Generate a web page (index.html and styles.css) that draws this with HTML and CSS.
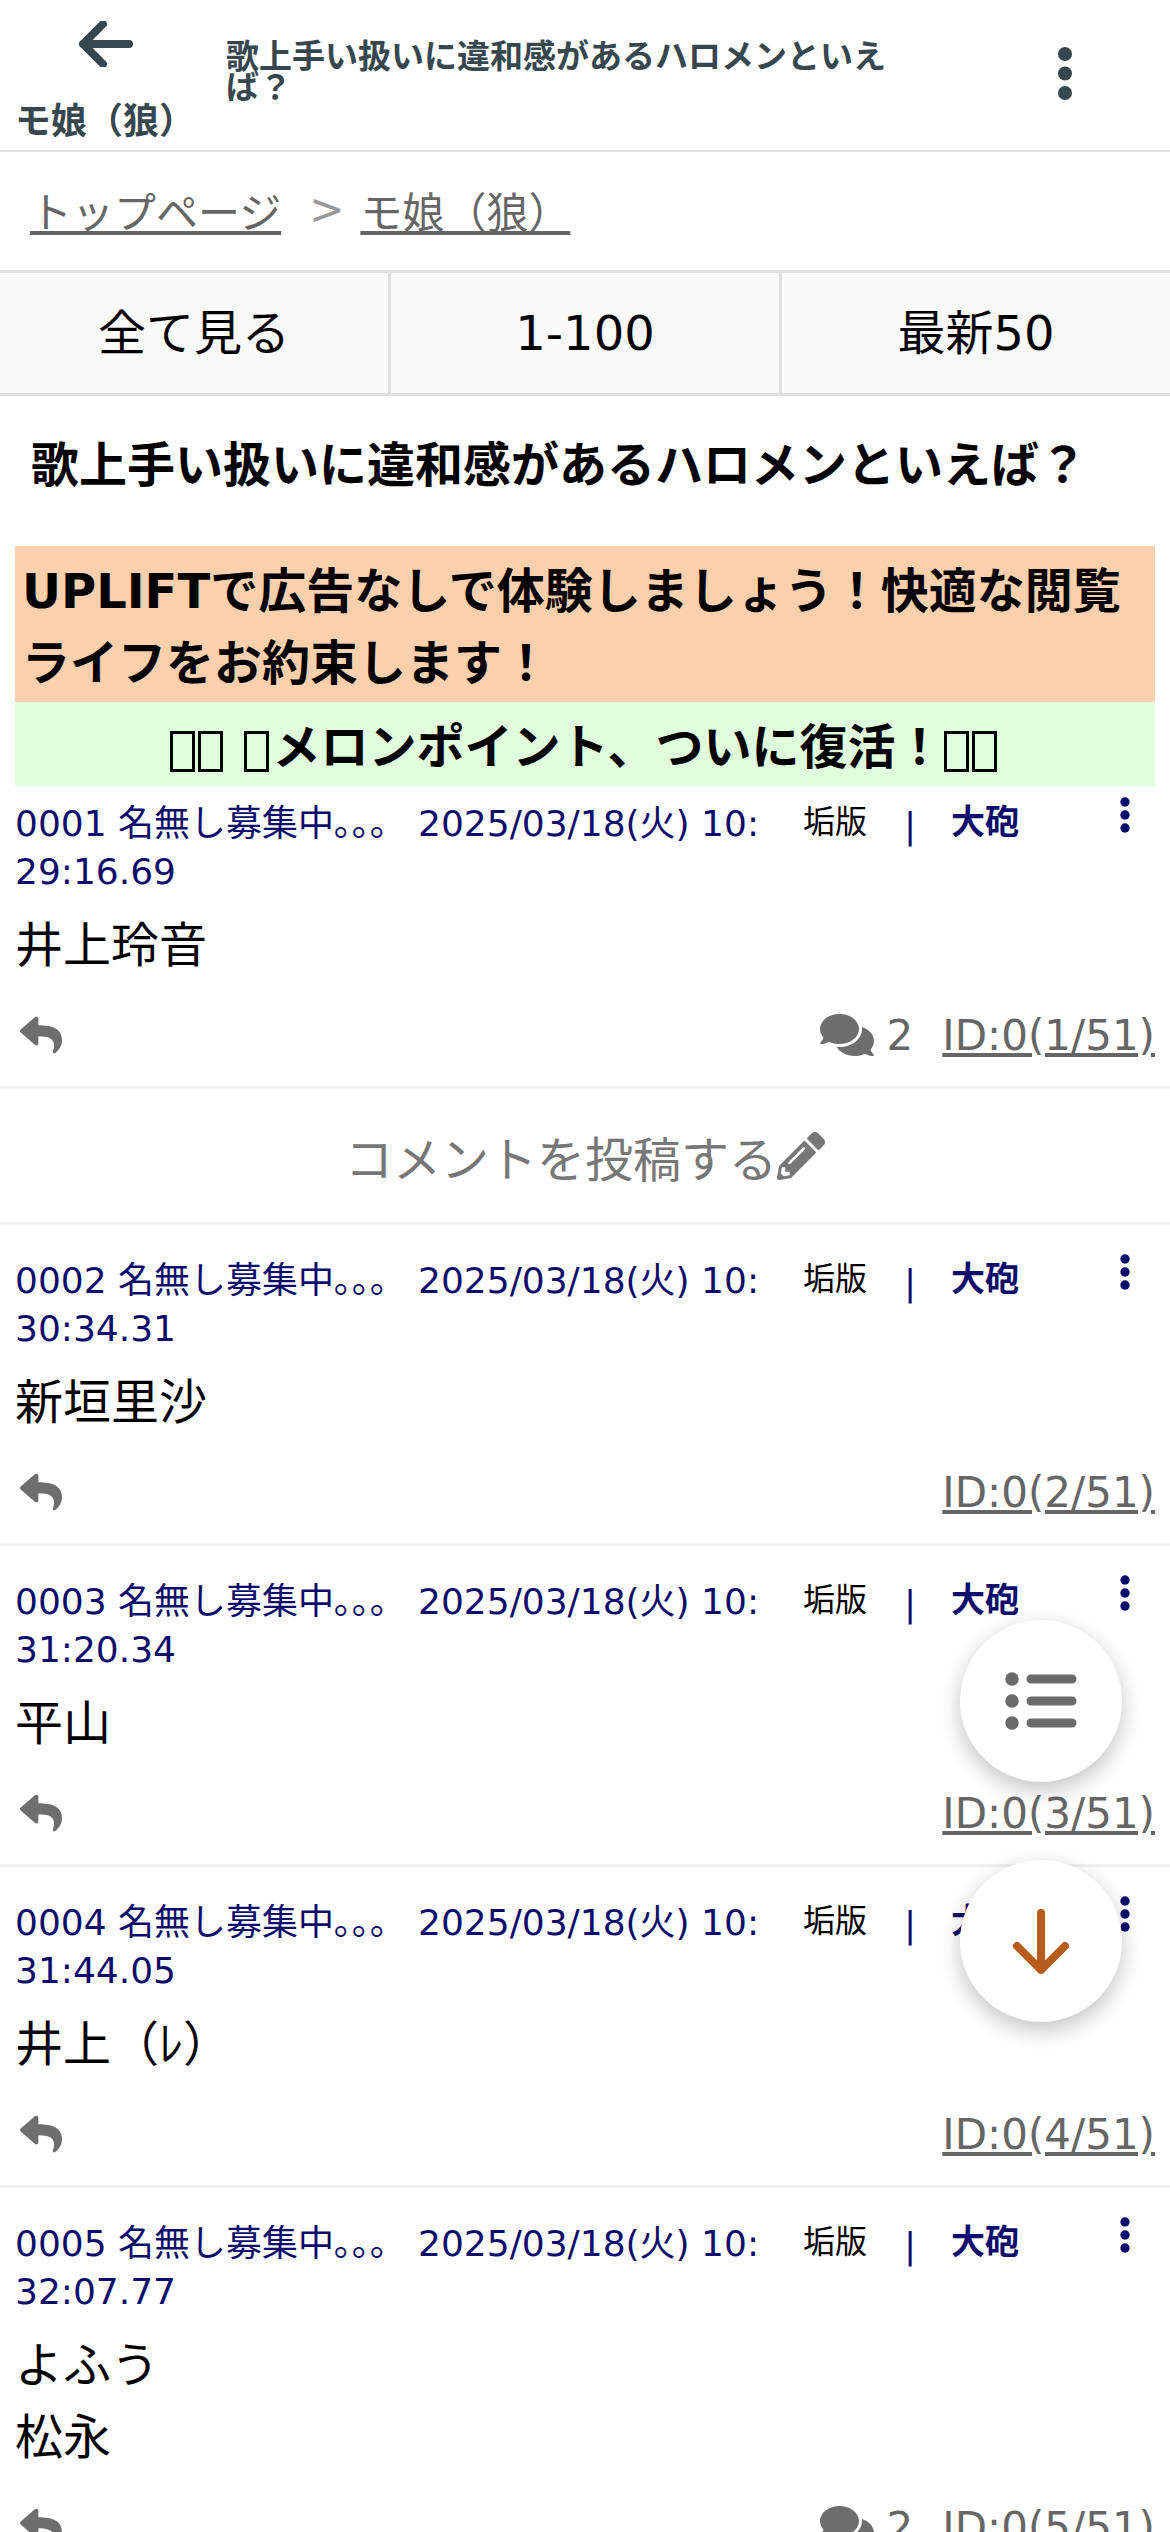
FILE: index.html
```html
<!DOCTYPE html>
<html lang="ja">
<head>
  <meta charset="UTF-8" />
  <meta name="viewport" content="width=device-width, initial-scale=1.0" />
  <title>歌上手い扱いに違和感があるハロメンといえば？</title>
  <link rel="stylesheet" href="styles.css">
</head>
<body>
  <svg class="icon-defs" width="0" height="0">
    <symbol id="ic-reply" viewBox="0 0 512 512"><path d="M8.309 189.836L184.313 37.851C199.719 24.546 224 35.347 224 56.015v80.053c160.629 1.839 288 34.032 288 186.258 0 61.441-39.581 122.309-83.333 154.132-13.653 9.931-33.111-2.533-28.077-18.631 45.344-145.012-21.507-183.51-176.59-185.742V360c0 20.7-24.3 31.453-39.687 18.164l-176.004-152c-11.071-9.562-11.086-26.753 0-36.328z"/></symbol>
    <symbol id="ic-comments" viewBox="0 0 576 512"><path d="M416 192c0-88.4-93.1-160-208-160S0 103.6 0 192c0 34.3 14.1 65.9 38 92-13.4 30.2-35.5 54.2-35.8 54.5-2.2 2.3-2.8 5.7-1.5 8.7S4.8 352 8 352c36.6 0 66.9-12.3 88.7-25 32.2 15.7 70.3 25 111.3 25 114.9 0 208-71.6 208-160zm122 220c23.9-26 38-57.7 38-92 0-66.9-53.5-124.2-129.3-148.1.9 6.6 1.3 13.3 1.3 20.1 0 105.9-107.7 192-240 192-10.8 0-21.3-.8-31.7-1.9C207.8 439.6 281.8 480 368 480c41 0 79.1-9.2 111.3-25 21.8 12.7 52.1 25 88.7 25 3.2 0 6.1-1.9 7.3-4.8 1.3-2.9.7-6.3-1.5-8.7-.3-.3-22.4-24.2-35.8-54.5z"/></symbol>
    <symbol id="ic-kebab" viewBox="0 0 12 36"><circle cx="6" cy="5" r="4.7"/><circle cx="6" cy="18" r="4.7"/><circle cx="6" cy="31" r="4.7"/></symbol>
  </svg>

  <header class="topbar">
    <div class="topbar-left">
      <svg class="back-icon" viewBox="0 0 56 46"><path d="M52 23H6M26 3L6 23l20 20"/></svg>
      <div class="board-name">モ娘（狼）</div>
    </div>
    <div class="topbar-title">歌上手い扱いに違和感があるハロメンといえば？</div>
    <svg class="topbar-menu" viewBox="0 0 14 53"><circle cx="7" cy="7" r="7"/><circle cx="7" cy="26.5" r="7"/><circle cx="7" cy="46" r="7"/></svg>
  </header>

  <nav class="crumbs">
    <a href="#">トップページ</a>
    <span class="crumb-sep">&gt;</span>
    <a href="#">モ娘（狼）</a>
  </nav>

  <div class="tabs">
    <a class="tab" href="#">全て見る</a>
    <a class="tab" href="#">1-100</a>
    <a class="tab" href="#">最新50</a>
  </div>

  <h1 class="thread-title">歌上手い扱いに違和感があるハロメンといえば？</h1>

  <div class="promo promo-orange">UPLIFTで広告なしで体験しましょう！快適な閲覧ライフをお約束します！</div>
  <div class="promo promo-green"><span class="tofu"></span><span class="tofu"></span><span class="tofu tofu-gap"></span>メロンポイント、ついに復活！<span class="tofu"></span><span class="tofu"></span></div>

  <article class="post post-first">
    <div class="post-head">
      <div class="post-meta">0001 名無し募集中｡｡｡<span class="post-date">2025/03/18(火) 10:<br>29:16.69</span></div>
      <span class="post-old">垢版</span><span class="post-sep">|</span><span class="post-gun">大砲</span>
      <svg class="post-menu"><use href="#ic-kebab"/></svg>
    </div>
    <div class="post-body">井上玲音</div>
    <div class="post-foot">
      <svg class="reply-icon"><use href="#ic-reply"/></svg>
      <span class="post-replies"><svg class="comments-icon"><use href="#ic-comments"/></svg>2</span>
      <a class="post-id" href="#">ID:0(1/51)</a>
    </div>
  </article>

  <div class="comment-link">コメントを投稿する<svg class="pencil-icon" viewBox="0 0 512 512"><path d="M497.9 142.1l-46.1 46.1c-4.7 4.7-12.3 4.7-17 0l-111-111c-4.7-4.7-4.7-12.3 0-17l46.1-46.1c18.7-18.7 49.1-18.7 67.9 0l60.1 60.1c18.8 18.7 18.8 49.1 0 67.9zM284.2 99.8L21.6 362.4.4 483.9c-2.9 16.4 11.4 30.6 27.8 27.8l121.5-21.3 262.6-262.6c4.7-4.7 4.7-12.3 0-17l-111-111c-4.8-4.7-12.4-4.7-17.1 0zM124.1 339.9c-5.5-5.5-5.5-14.3 0-19.8l154-154c5.5-5.5 14.3-5.5 19.8 0s5.5 14.3 0 19.8l-154 154c-5.5 5.5-14.3 5.5-19.8 0zM88 424h48v36.3l-64.5 11.3-31.1-31.1L51.7 376H88v48z"/></svg></div>

  <article class="post">
    <div class="post-head">
      <div class="post-meta">0002 名無し募集中｡｡｡<span class="post-date">2025/03/18(火) 10:<br>30:34.31</span></div>
      <span class="post-old">垢版</span><span class="post-sep">|</span><span class="post-gun">大砲</span>
      <svg class="post-menu"><use href="#ic-kebab"/></svg>
    </div>
    <div class="post-body">新垣里沙</div>
    <div class="post-foot">
      <svg class="reply-icon"><use href="#ic-reply"/></svg>
      <a class="post-id" href="#">ID:0(2/51)</a>
    </div>
  </article>

  <article class="post">
    <div class="post-head">
      <div class="post-meta">0003 名無し募集中｡｡｡<span class="post-date">2025/03/18(火) 10:<br>31:20.34</span></div>
      <span class="post-old">垢版</span><span class="post-sep">|</span><span class="post-gun">大砲</span>
      <svg class="post-menu"><use href="#ic-kebab"/></svg>
    </div>
    <div class="post-body">平山</div>
    <div class="post-foot">
      <svg class="reply-icon"><use href="#ic-reply"/></svg>
      <a class="post-id" href="#">ID:0(3/51)</a>
    </div>
  </article>

  <article class="post">
    <div class="post-head">
      <div class="post-meta">0004 名無し募集中｡｡｡<span class="post-date">2025/03/18(火) 10:<br>31:44.05</span></div>
      <span class="post-old">垢版</span><span class="post-sep">|</span><span class="post-gun">大砲</span>
      <svg class="post-menu"><use href="#ic-kebab"/></svg>
    </div>
    <div class="post-body">井上（ﾚ）</div>
    <div class="post-foot">
      <svg class="reply-icon"><use href="#ic-reply"/></svg>
      <a class="post-id" href="#">ID:0(4/51)</a>
    </div>
  </article>

  <article class="post">
    <div class="post-head">
      <div class="post-meta">0005 名無し募集中｡｡｡<span class="post-date">2025/03/18(火) 10:<br>32:07.77</span></div>
      <span class="post-old">垢版</span><span class="post-sep">|</span><span class="post-gun">大砲</span>
      <svg class="post-menu"><use href="#ic-kebab"/></svg>
    </div>
    <div class="post-body">よふう<br>松永</div>
    <div class="post-foot">
      <svg class="reply-icon"><use href="#ic-reply"/></svg>
      <span class="post-replies"><svg class="comments-icon"><use href="#ic-comments"/></svg>2</span>
      <a class="post-id" href="#">ID:0(5/51)</a>
    </div>
  </article>

  <button class="fab fab-list">
    <svg class="fab-list-icon" viewBox="0 0 72 58"><circle cx="7" cy="7" r="6.7"/><circle cx="7" cy="29" r="6.7"/><circle cx="7" cy="51" r="6.7"/><path d="M26 7h41M26 29h41M26 51h41"/></svg>
  </button>
  <button class="fab fab-down">
    <svg class="fab-down-icon" viewBox="0 0 62 67"><path d="M31 5v57M7 38l24 24 24-24"/></svg>
  </button>
</body>
</html>
```

FILE: styles.css
```css
* { box-sizing: border-box; }

html, body {
  height: 2532px;
  overflow: hidden;
}

body {
  margin: 0;
  background: #fff;
  color: #000;
  font-family: "DejaVu Sans", "Noto Sans CJK JP", sans-serif;
}

a { color: inherit; }

.icon-defs { position: absolute; }

/* top bar */
.topbar {
  display: flex;
  height: 152px;
  border-bottom: 2px solid #e4e4e4;
  color: #37474f;
}

.topbar-left {
  width: 226px;
  padding: 21px 0 0 15px;
  flex-shrink: 0;
}

.back-icon {
  display: block;
  width: 56px;
  height: 46px;
  margin-left: 62px;
  fill: none;
  stroke: #37474f;
  stroke-width: 8;
  stroke-linecap: round;
  stroke-linejoin: round;
}

.board-name {
  margin-top: 35px;
  font-size: 36px;
  line-height: 40px;
  font-weight: bold;
}

.topbar-title {
  width: 680px;
  padding-top: 41px;
  font-size: 33px;
  line-height: 31px;
  font-weight: bold;
}

.topbar-menu {
  width: 14px;
  height: 53px;
  margin: 47px 0 0 152px;
  fill: #37474f;
}

/* breadcrumb */
.crumbs {
  display: flex;
  align-items: center;
  height: 118px;
  padding: 0 0 3px 30px;
  font-size: 42px;
  color: #666;
}

.crumb-sep {
  margin: 0 16px 0 28px;
  color: #999;
}

/* tabs */
.tabs {
  display: flex;
  height: 126px;
  background: #fafafa;
  border-top: 3px solid #e0e0e0;
  border-bottom: 3px solid #e0e0e0;
}

.tab {
  flex: 1;
  padding-top: 30px;
  font-size: 48px;
  line-height: 60px;
  text-align: center;
  text-decoration: none;
  border-left: 3px solid #e0e0e0;
}

.tab:first-child { border-left: 0; }

.thread-title {
  margin: 0;
  height: 150px;
  padding: 34px 0 0 31px;
  font-size: 48px;
  line-height: 70px;
  font-weight: bold;
}

/* promo banners */
.promo {
  margin: 0 15px;
  font-size: 48px;
  font-weight: bold;
  line-height: 72px;
}

.promo-orange {
  height: 156px;
  padding: 9px 7px;
  background: #fdd0ad;
}

.promo-green {
  height: 84px;
  padding-top: 9px;
  text-align: center;
  background: #e0ffdc;
}

/* missing glyph boxes from the emoji in the banner */
.tofu {
  display: inline-block;
  width: 25px;
  height: 41px;
  margin-right: 3px;
  vertical-align: -8px;
  border: 3px solid #000;
}

.tofu-gap { margin-left: 18px; }

/* posts */
.post {
  padding: 28px 0 21px 15px;
  border-bottom: 3px solid #f0f0f0;
}

.post-first { padding-top: 10px; }

.post-head {
  display: flex;
  align-items: flex-start;
}

.post-meta {
  width: 788px;
  padding-top: 4px;
  height: 99px;
  font-size: 36px;
  line-height: 48px;
  color: #0c0c6c;
}

.post-date { margin-left: 30px; }

.post-old,
.post-gun {
  padding-top: 2px;
  font-size: 32px;
  line-height: 48px;
}

.post-sep {
  margin: 3px 0 0 37px;
  width: 47px;
  font-size: 36px;
  line-height: 54px;
  color: #0c0c6c;
}

.post-gun {
  font-size: 34px;
  font-weight: bold;
  color: #0c0c6c;
}

.post-menu {
  width: 12px;
  height: 36px;
  margin: 1px 0 0 100px;
  fill: #0c0c6c;
}

.post-body {
  margin-top: 14px;
  font-size: 48px;
  line-height: 72px;
}

.post-foot {
  display: flex;
  align-items: center;
  height: 60px;
  margin-top: 24px;
  padding-right: 15px;
  font-size: 42px;
  color: #666;
}

.reply-icon {
  width: 42px;
  height: 42px;
  margin-left: 5px;
  fill: #6e6e6e;
}

.post-replies {
  display: flex;
  align-items: center;
  margin-left: auto;
}

.comments-icon {
  width: 54px;
  height: 48px;
  margin-right: 13px;
  fill: #6e6e6e;
}

.post-id { margin-left: 33px; }

.post-replies + .post-id { margin-left: 29px; }

.reply-icon + .post-id { margin-left: auto; }

.comment-link {
  display: flex;
  align-items: center;
  justify-content: center;
  height: 136px;
  font-size: 48px;
  color: #777;
  border-bottom: 3px solid #f0f0f0;
}

.pencil-icon {
  width: 48px;
  height: 48px;
  fill: #777;
}

/* floating buttons */
.fab {
  position: fixed;
  right: 48px;
  width: 162px;
  height: 162px;
  padding: 0;
  display: flex;
  align-items: center;
  justify-content: center;
  background: #fff;
  border: 0;
  border-radius: 50%;
  box-shadow: 0 8px 22px rgba(0, 0, 0, 0.24);
}

.fab-list { top: 1620px; }

.fab-down { top: 1860px; }

.fab-list-icon {
  width: 72px;
  height: 58px;
  fill: #6a6a6a;
  stroke-linecap: round;
}

.fab-list-icon path {
  fill: none;
  stroke: #6a6a6a;
  stroke-width: 9;
}

.fab-down-icon {
  width: 62px;
  height: 67px;
  fill: none;
  stroke: #b85c1c;
  stroke-width: 8;
  stroke-linecap: round;
  stroke-linejoin: round;
}
```
